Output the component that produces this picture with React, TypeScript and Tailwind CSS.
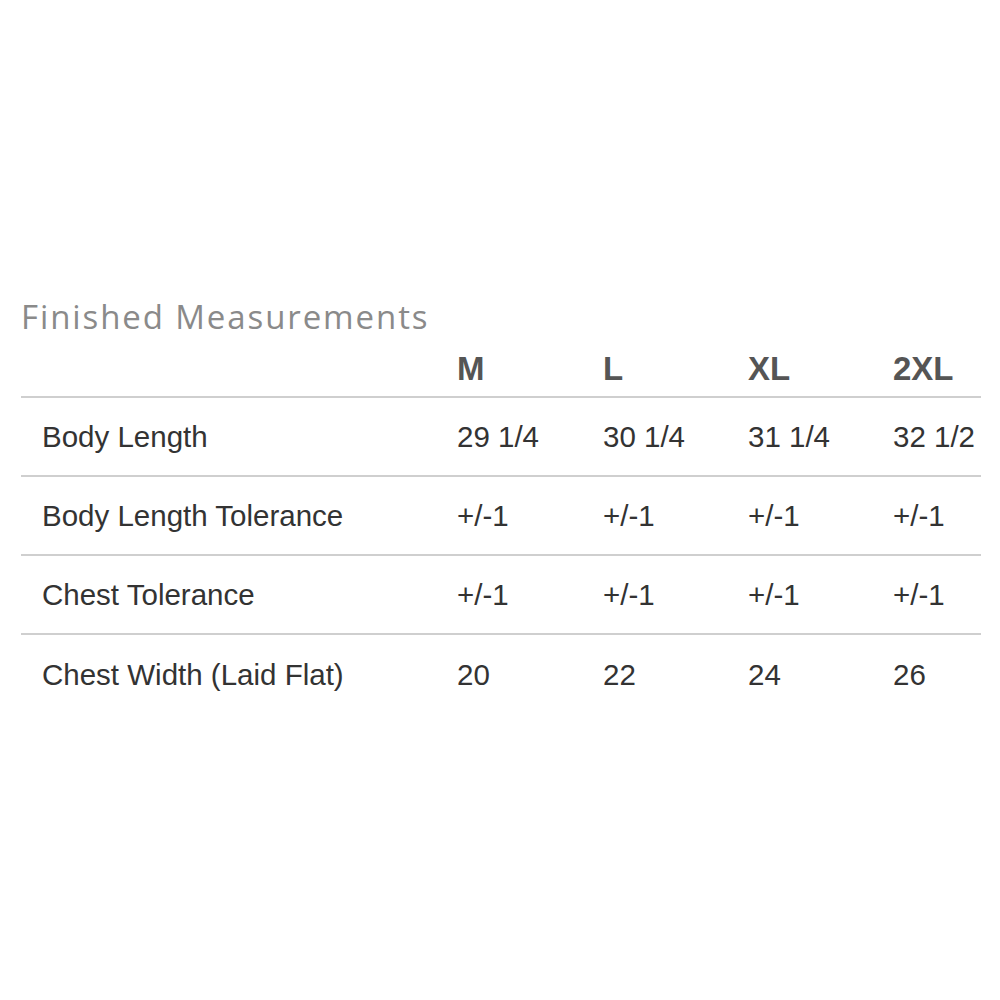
const sizes = ["M", "L", "XL", "2XL"];

const rows = [
  { label: "Body Length", values: ["29 1/4", "30 1/4", "31 1/4", "32 1/2"] },
  { label: "Body Length Tolerance", values: ["+/-1", "+/-1", "+/-1", "+/-1"] },
  { label: "Chest Tolerance", values: ["+/-1", "+/-1", "+/-1", "+/-1"] },
  { label: "Chest Width (Laid Flat)", values: ["20", "22", "24", "26"] },
];

const cols = "grid grid-cols-[415px_146px_145px_145px_109px]";

export default function App() {
  return (
    <div className="w-[1000px] h-[1000px] bg-white flex flex-col pt-[293px] pl-[21px]">
      <h2 className="text-[33px] leading-[48px] text-[#8a8a8a] font-['Open_Sans',sans-serif] tracking-[1.9px]">
        Finished Measurements
      </h2>

      <div className="w-[960px] font-['Liberation_Sans',Arial,sans-serif]">
        <div className={`${cols} h-[57px] items-center border-b-2 border-[#cfcfcf]`}>
          <div />
          {sizes.map((s) => (
            <div key={s} className="pl-[21px] text-[33px] font-bold text-[#555555]">
              {s}
            </div>
          ))}
        </div>

        {rows.map((row, i) => (
          <div
            key={row.label}
            className={`${cols} h-[79px] items-center pt-[2px] text-[29.5px] text-[#333333] ${
              i < rows.length - 1 ? "border-b-2 border-[#cfcfcf]" : ""
            }`}
          >
            <div className="pl-[21px]">{row.label}</div>
            {row.values.map((v, j) => (
              <div key={j} className="pl-[21px] whitespace-nowrap">
                {v}
              </div>
            ))}
          </div>
        ))}
      </div>
    </div>
  );
}
